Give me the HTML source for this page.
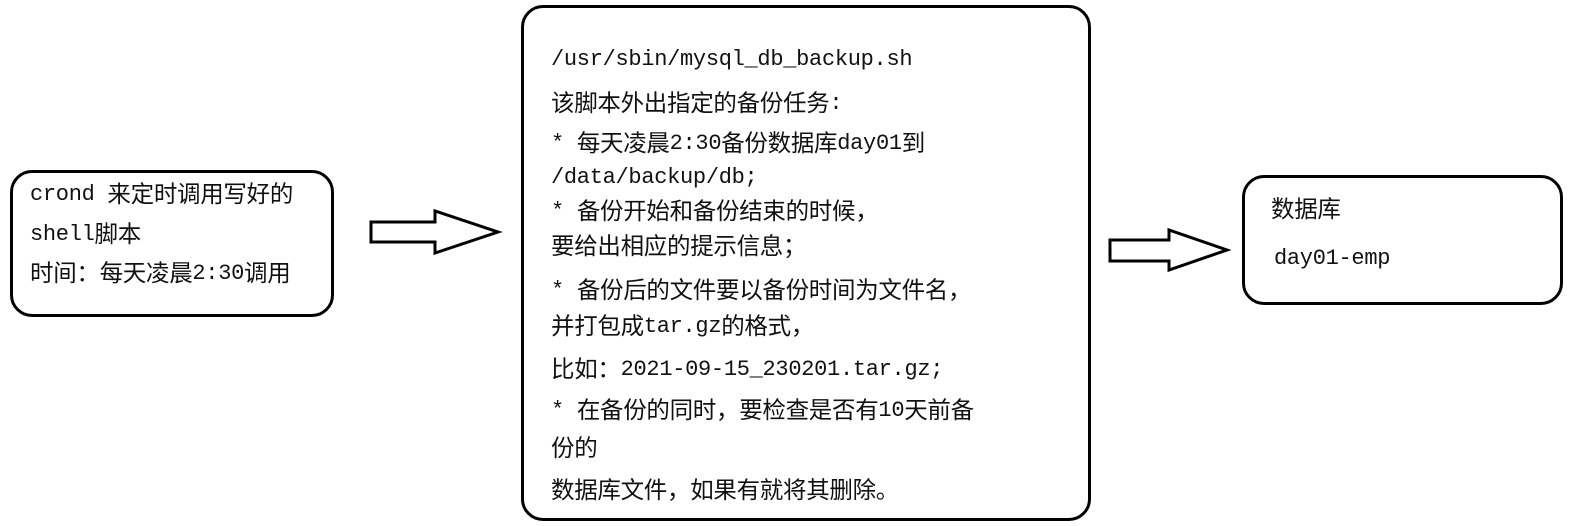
<!DOCTYPE html>
<html><head><meta charset="utf-8"><style>
body{margin:0;width:1570px;height:526px;background:#fff;position:relative;overflow:hidden;font-family:"Liberation Mono","Noto Sans CJK SC",monospace;font-size:22px;letter-spacing:-0.3px;color:#111}
.box{position:absolute;border:3px solid #000;border-radius:22px;box-sizing:border-box;background:#fff}
.t{position:absolute;white-space:nowrap;line-height:30px}
i{font-style:normal;font-size:23.5px;letter-spacing:-0.3px;position:relative;top:2px}
</style></head><body>
<div class="box" style="left:10px;top:170px;width:324px;height:147px"></div>
<div class="box" style="left:521px;top:5px;width:570px;height:516px"></div>
<div class="box" style="left:1242px;top:175px;width:321px;height:130px"></div>
<svg width="1570" height="526" style="position:absolute;left:0;top:0">
<polygon points="371,222 435,222 435,211 498,232 435,253 435,242 371,242" fill="#fff" stroke="#000" stroke-width="3"/>
<polygon points="1110,240 1169,240 1169,230 1227,250 1169,270 1169,261 1110,261" fill="#fff" stroke="#000" stroke-width="3"/>
</svg>
<div class="t" style="left:30px;top:180px">crond <i>来定时调用写好的</i></div>
<div class="t" style="left:30px;top:220px">shell<i>脚本</i></div>
<div class="t" style="left:30px;top:259px"><i>时间：每天凌晨</i>2:30<i>调用</i></div>
<div class="t" style="left:551px;top:45px">/usr/sbin/mysql_db_backup.sh</div>
<div class="t" style="left:551px;top:89px"><i>该脚本外出指定的备份任务</i>:</div>
<div class="t" style="left:551px;top:129px">* <i>每天凌晨</i>2:30<i>备份数据库</i>day01<i>到</i></div>
<div class="t" style="left:551px;top:163px">/data/backup/db;</div>
<div class="t" style="left:551px;top:197px">* <i>备份开始和备份结束的时候，</i></div>
<div class="t" style="left:551px;top:232px"><i>要给出相应的提示信息；</i></div>
<div class="t" style="left:551px;top:276px">* <i>备份后的文件要以备份时间为文件名，</i></div>
<div class="t" style="left:551px;top:312px"><i>并打包成</i>tar.gz<i>的格式，</i></div>
<div class="t" style="left:551px;top:355px"><i>比如：</i>2021-09-15_230201.tar.gz;</div>
<div class="t" style="left:551px;top:396px">* <i>在备份的同时，要检查是否有</i>10<i>天前备</i></div>
<div class="t" style="left:551px;top:434px"><i>份的</i></div>
<div class="t" style="left:551px;top:476px"><i>数据库文件，如果有就将其删除。</i></div>
<div class="t" style="left:1271px;top:195px"><i>数据库</i></div>
<div class="t" style="left:1274px;top:244px">day01-emp</div>
</body></html>
